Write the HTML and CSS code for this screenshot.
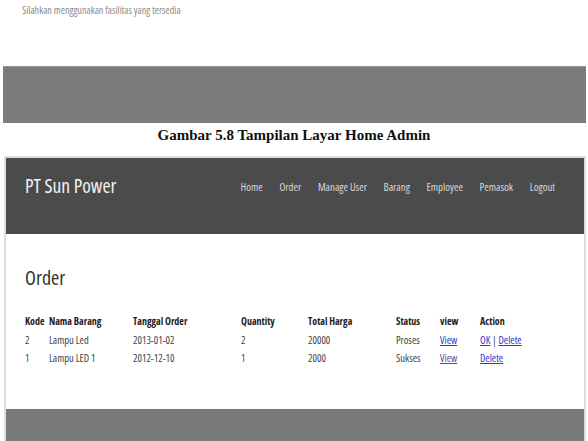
FILE: index.html
```html
<!DOCTYPE html>
<html lang="id">
<head>
  <meta charset="UTF-8" />
  <meta name="viewport" content="width=device-width, initial-scale=1.0" />
  <title>Tampilan Layar Order</title>
  <link rel="stylesheet" href="styles.css">
</head>
<body>
  <div class="prev-page">
    <p class="welcome">Silahkan menggunakan fasilitas yang tersedia</p>
    <div class="footer-strip"></div>
  </div>
  <p class="caption">Gambar 5.8 Tampilan Layar Home Admin</p>

  <div class="frame">
    <div class="header">
      <div class="brand">PT Sun Power</div>
      <ul class="nav">
        <li>Home</li>
        <li>Order</li>
        <li>Manage User</li>
        <li>Barang</li>
        <li>Employee</li>
        <li>Pemasok</li>
        <li>Logout</li>
      </ul>
    </div>
    <div class="content">
      <h1>Order</h1>
      <table class="orders">
        <colgroup>
          <col class="c-kode"><col class="c-nama"><col class="c-tgl"><col class="c-qty">
          <col class="c-total"><col class="c-status"><col class="c-view"><col>
        </colgroup>
        <tr>
          <th>Kode</th><th>Nama Barang</th><th>Tanggal Order</th><th>Quantity</th>
          <th>Total Harga</th><th>Status</th><th>view</th><th>Action</th>
        </tr>
        <tr>
          <td>2</td><td>Lampu Led</td><td>2013-01-02</td><td>2</td>
          <td>20000</td><td>Proses</td><td><a href="#">View</a></td>
          <td><a href="#">OK</a> | <a href="#">Delete</a></td>
        </tr>
        <tr>
          <td>1</td><td>Lampu LED 1</td><td>2012-12-10</td><td>1</td>
          <td>2000</td><td>Sukses</td><td><a href="#" class="visited">View</a></td>
          <td><a href="#">Delete</a></td>
        </tr>
      </table>
    </div>
    <div class="footer"></div>
  </div>
</body>
</html>
```

FILE: styles.css
```css
body {
  margin: 0;
  background: #fff;
  font-family: "Open Sans", sans-serif;
  font-stretch: condensed;
  overflow: hidden;
}
.prev-page {
  padding-top: 3px;
}
.welcome {
  margin: 0 0 0 22px;
  font-size: 10.2px;
  color: #8a8a8a;
}
.footer-strip {
  margin: 49px 2px 0 3px;
  height: 56px;
  background: #7b7b7b;
  border-top: 1px solid #999;
}
.caption {
  margin: 4px 0 0;
  text-align: center;
  font-family: "Liberation Serif", serif;
  font-stretch: normal;
  font-weight: bold;
  font-size: 15px;
  color: #111;
}
.frame {
  margin: 12px 2px 0 4px;
  border: 2px solid #dedede;
  border-bottom: none;
}
.header {
  height: 76px;
  background: #4b4b4b;
  display: flex;
  align-items: flex-start;
  justify-content: space-between;
}
.brand {
  margin: 14px 0 0 19px;
  font-size: 19.5px;
  color: #f2f2f2;
}
.nav {
  list-style: none;
  display: flex;
  gap: 16.7px;
  margin: 21px 29px 0 0;
  padding: 0;
  font-size: 10.8px;
  color: #d8d8d8;
}
.content {
  height: 175px;
  padding: 0 19px;
}
h1 {
  margin: 0;
  padding-top: 30px;
  font-size: 20px;
  font-weight: normal;
  color: #333;
}
.orders {
  margin-top: 23px;
  border-collapse: collapse;
  table-layout: fixed;
  width: 520px;
  font-size: 10.5px;
  color: #444;
}
.orders th {
  text-align: left;
  font-weight: bold;
  font-size: 10px;
  color: #222;
  padding: 0 0 3px;
}
.orders td {
  padding: 0;
  height: 18px;
}
.c-kode { width: 24px; }
.c-nama { width: 84px; }
.c-tgl { width: 108px; }
.c-qty { width: 67px; }
.c-total { width: 88px; }
.c-status { width: 44px; }
.c-view { width: 40px; }
a { color: #3535c8; }
a.visited { color: #6b3f8f; }
.footer {
  height: 33px;
  background: #7a7a7a;
}
```
